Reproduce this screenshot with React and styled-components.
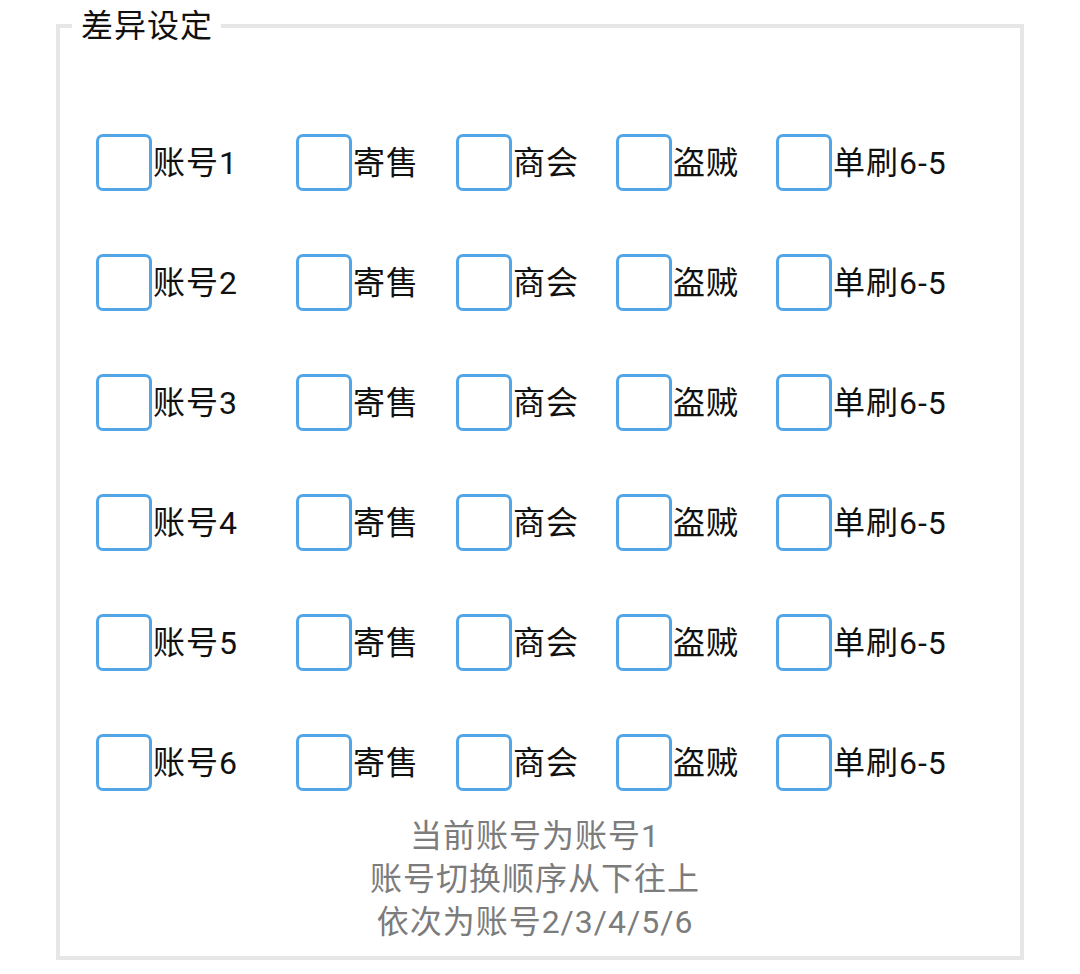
import React from 'react';
import styled, { createGlobalStyle } from 'styled-components';

const GlobalStyle = createGlobalStyle`
  html, body {
    margin: 0;
    padding: 0;
    background: #ffffff;
  }
  body {
    font-family: Roboto, "Noto Sans CJK SC", "Noto Sans", sans-serif;
    letter-spacing: 1px;
  }
`;

const Frame = styled.fieldset`
  margin: 4px 56px 0;
  padding: 0 0 12px;
  border: 4px solid #e6e6e6;
  min-width: 0;
`;

const Legend = styled.legend`
  margin-left: 12px;
  padding: 0 8px 0 9px;
  font-size: 32px;
  line-height: 44px;
  color: #111111;
`;

const Grid = styled.div`
  display: grid;
  grid-template-columns: 200px 160px 160px 160px auto;
  row-gap: 63px;
  padding: 86px 0 0 36px;
`;

const Option = styled.label`
  display: flex;
  align-items: center;
  height: 57px;
  cursor: pointer;
`;

const Box = styled.span`
  box-sizing: border-box;
  width: 56px;
  height: 57px;
  flex: none;
  border: 3px solid #52a6e8;
  border-radius: 7px;
  background: ${({ $on }) => ($on ? '#52a6e8' : '#ffffff')};
`;

const Text = styled.span`
  margin-left: 1px;
  font-size: 32px;
  line-height: 44px;
  color: #111111;
  white-space: nowrap;
`;

const Notes = styled.div`
  margin-top: 24px;
  padding-right: 10px;
  text-align: center;
  font-size: 32px;
  line-height: 43px;
  color: #7c7c7c;
`;

const columns = ['寄售', '商会', '盗贼', '单刷6-5'];
const accounts = [1, 2, 3, 4, 5, 6];

function CheckItem({ label, checked }) {
  return (
    <Option>
      <Box $on={checked} />
      <Text>{label}</Text>
    </Option>
  );
}

export default function App() {
  return (
    <>
      <GlobalStyle />
      <Frame>
        <Legend>差异设定</Legend>
        <Grid>
          {accounts.map((n) => (
            <React.Fragment key={n}>
              <CheckItem label={`账号${n}`} />
              {columns.map((c) => (
                <CheckItem key={c} label={c} />
              ))}
            </React.Fragment>
          ))}
        </Grid>
        <Notes>
          当前账号为账号1
          <br />
          账号切换顺序从下往上
          <br />
          依次为账号2/3/4/5/6
        </Notes>
      </Frame>
    </>
  );
}
